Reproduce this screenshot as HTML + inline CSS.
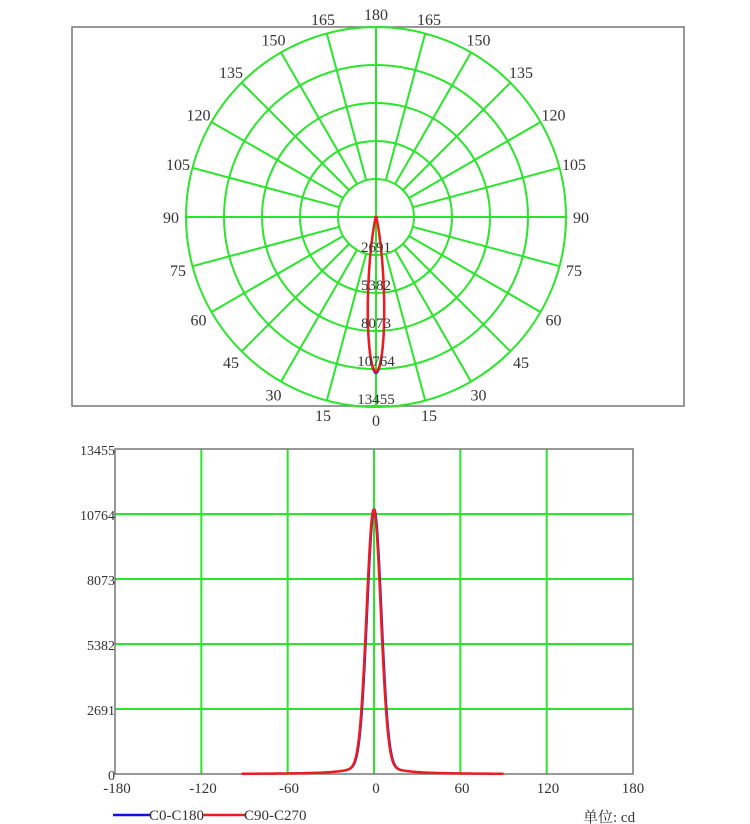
<!DOCTYPE html>
<html><head><meta charset="utf-8"><style>
html,body{margin:0;padding:0;background:#fff;width:750px;height:824px;overflow:hidden}
svg text{font-family:"Liberation Serif","Noto Serif CJK SC",serif;fill:#333}
</style></head><body>
<svg id="s" width="750" height="824" viewBox="0 0 750 824" xmlns="http://www.w3.org/2000/svg">
<rect x="72" y="27" width="612" height="379" fill="none" stroke="#777" stroke-width="1.5"/>
<g id="polar" stroke="#2ae62a" stroke-width="2" fill="none"></g>
<g id="plabels" font-size="16" text-anchor="middle"></g>
<path id="lobeB" fill="none" stroke="#2020e0" stroke-width="2"/>
<path id="lobeR" fill="none" stroke="#ee1c1c" stroke-width="2.5"/>
<g font-size="15" text-anchor="middle">
<text x="376" y="252">2691</text><text x="376" y="290">5382</text>
<text x="376" y="328">8073</text><text x="376" y="366">10764</text><text x="376" y="404">13455</text>
</g>
<g id="cart" stroke="#2ae62a" stroke-width="2"></g>
<rect x="115" y="449" width="518" height="325" fill="none" stroke="#777" stroke-width="1.5"/>
<g font-size="14" text-anchor="end">
<text x="115" y="455">13455</text><text x="115" y="520">10764</text><text x="115" y="585">8073</text>
<text x="115" y="650">5382</text><text x="115" y="715">2691</text><text x="115" y="780">0</text>
</g>
<g font-size="15" text-anchor="middle">
<text x="117" y="793">-180</text><text x="203" y="793">-120</text><text x="289" y="793">-60</text>
<text x="376" y="793">0</text><text x="462" y="793">60</text><text x="548" y="793">120</text><text x="633" y="793">180</text>
</g>
<path id="cB" fill="none" stroke="#2020e0" stroke-width="2"/>
<path id="cR" fill="none" stroke="#ee1c1c" stroke-width="2.5"/>
<line x1="113" y1="815" x2="150" y2="815" stroke="#1010e0" stroke-width="2.5"/>
<text x="149" y="820" font-size="15">C0-C180</text>
<line x1="203" y1="815" x2="245" y2="815" stroke="#ee1c1c" stroke-width="2.5"/>
<text x="244" y="820" font-size="15">C90-C270</text>
<text x="583" y="822" font-size="15">单位: cd</text>
</svg>
<script>
var NS="http://www.w3.org/2000/svg";
function el(p,t,a,txt){var e=document.createElementNS(NS,t);for(var k in a)e.setAttribute(k,a[k]);if(txt!=null)e.textContent=txt;p.appendChild(e);return e;}
var cx=376,cy=217,R=190;
var g=document.getElementById('polar');
for(var i=1;i<=5;i++)el(g,'circle',{cx:cx,cy:cy,r:R*i/5});
for(var a=0;a<360;a+=15){var t=a*Math.PI/180;var r0=(a%90==0)?0:38;
 el(g,'line',{x1:cx+r0*Math.sin(t),y1:cy+r0*Math.cos(t),x2:cx+R*Math.sin(t),y2:cy+R*Math.cos(t)});}
var pl=document.getElementById('plabels');
for(var a=0;a<=180;a+=15){var t=a*Math.PI/180;var rr=(a==0||a==180)?203:205;
 [1,-1].forEach(function(s){if((a==0||a==180)&&s<0)return;
 el(pl,'text',{x:cx+s*rr*Math.sin(t),y:cy+rr*Math.cos(t)+6},String(a));});}
function I(th){return 10500*Math.exp(-0.693*Math.pow(th/5.8,2))+450/(1+Math.pow(th/14,2));}
function lobe(sc){var d='';for(var th=-90;th<=90;th+=0.5){var v=I(th)*sc;var r=v/13455*R;var t=th*Math.PI/180;
 d+=(d?'L':'M')+(cx+r*Math.sin(t)).toFixed(2)+' '+(cy+r*Math.cos(t)).toFixed(2);}return d;}
document.getElementById('lobeB').setAttribute('d',lobe(1.01));
document.getElementById('lobeR').setAttribute('d',lobe(1));
var c=document.getElementById('cart');
[-120,-60,0,60,120].forEach(function(v){var x=115+(v+180)*518/360;el(c,'line',{x1:x,y1:449,x2:x,y2:774});});
[1,2,3,4].forEach(function(i){var y=774-i*65;el(c,'line',{x1:115,y1:y,x2:633,y2:y});});
function curve(sh){var d='';for(var th=-92;th<=90;th+=0.5){var x=115+(th+180)*518/360;var y=774-I(th-sh)/13455*325;
 d+=(d?'L':'M')+x.toFixed(2)+' '+y.toFixed(2);}return d;}
document.getElementById('cB').setAttribute('d',curve(0.3));
document.getElementById('cR').setAttribute('d',curve(-0.2));
</script>
</body></html>
